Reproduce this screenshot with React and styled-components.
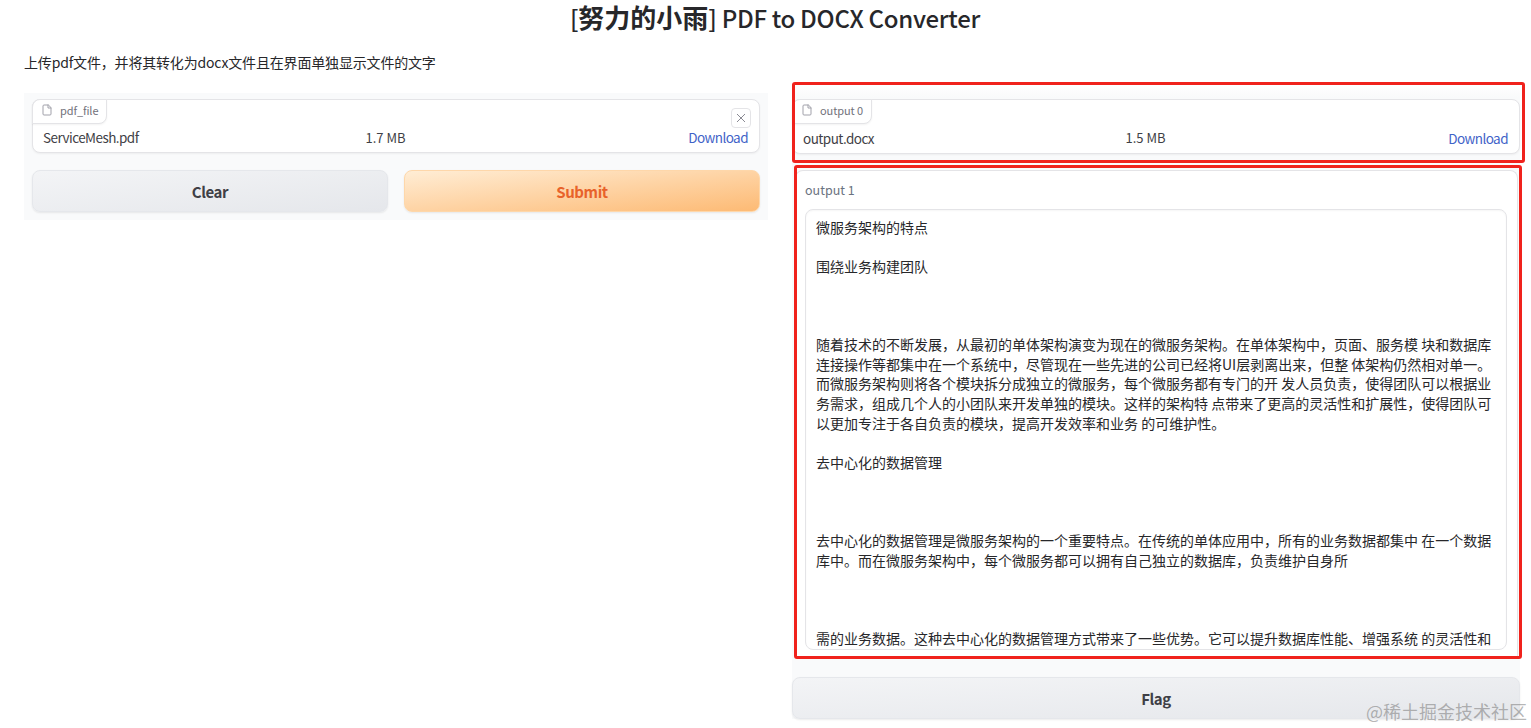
import React from 'react';
import styled, { createGlobalStyle } from 'styled-components';

const GlobalStyle = createGlobalStyle`
  html, body {
    margin: 0;
    padding: 0;
    background: #fff;
    overflow: hidden;
  }
  body {
    font-family: "Noto Sans CJK SC", "Noto Sans", sans-serif;
    color: #27272a;
  }
`;

const Page = styled.div`
  position: relative;
  width: 1531px;
  height: 728px;
  padding: 0 11px 0 24px;
  box-sizing: border-box;
  overflow: hidden;
`;

const Title = styled.h1`
  margin: -2px 0 0;
  height: 38px;
  padding-left: 6px;
  font-size: 24px;
  line-height: 38px;
  font-weight: 500;
  letter-spacing: -0.3px;
  text-align: center;
  color: #27272a;
  strong {
    font-size: 26px;
    font-weight: 700;
    letter-spacing: 0;
  }
`;

const Intro = styled.p`
  margin: 17px 0 0;
  font-size: 14px;
  line-height: 19px;
  letter-spacing: -0.17px;
  color: #27272a;
`;

const Columns = styled.div`
  display: grid;
  grid-template-columns: 744px 728px;
  gap: 24px;
  margin-top: 21px;
  align-items: start;
`;

const LeftPanel = styled.section`
  display: flex;
  flex-direction: column;
  gap: 17px;
  height: 127px;
  padding: 6px 8px 8px;
  box-sizing: border-box;
  background: #f9fafb;
`;

const RightColumn = styled.section`
  position: relative;
  display: flex;
  flex-direction: column;
  height: 634px;
  margin-top: -8px;
  padding-top: 14px;
  box-sizing: border-box;
  background: linear-gradient(#fff, #f9fafb 12px);
`;

const FileCard = styled.div`
  position: relative;
  display: flex;
  flex-direction: column;
  justify-content: flex-end;
  height: 55px;
  box-sizing: border-box;
  background: #fff;
  border: 1px solid #e4e4e7;
  border-radius: 8px;
  box-shadow: 0 1px 2px rgba(0, 0, 0, 0.05);
`;

const FileTab = styled.div`
  position: absolute;
  top: -1px;
  left: -1px;
  display: flex;
  align-items: center;
  gap: 7px;
  height: 25px;
  padding: 0 8px 3px;
  box-sizing: border-box;
  font-size: 11px;
  letter-spacing: -0.1px;
  color: #71717a;
  background: #fff;
  border: 1px solid #e4e4e7;
  border-radius: 8px 0 8px 0;
  box-shadow: 0 1px 2px rgba(0, 0, 0, 0.05);
`;

const CloseButton = styled.button`
  position: absolute;
  top: 8px;
  right: 8px;
  display: flex;
  align-items: center;
  justify-content: center;
  width: 20px;
  height: 20px;
  padding: 0;
  background: #fff;
  border: 1px solid #e4e4e7;
  border-radius: 4px;
`;

const FileRow = styled.div`
  display: grid;
  grid-template-columns: 1fr auto 1fr;
  align-items: center;
  height: 28px;
  padding: 0 11px 1px 10px;
  font-size: 13.5px;
  letter-spacing: -0.55px;
  color: #3f3f46;
`;

const FileSize = styled.span`
  margin-right: 20px;
  font-size: 13px;
  letter-spacing: 0;
`;

const Download = styled.a`
  justify-self: end;
  color: #3f63c8;
  text-decoration: none;
`;

const ButtonRow = styled.div`
  display: grid;
  grid-template-columns: 1fr 1fr;
  gap: 16px;
`;

const ActionButton = styled.button`
  display: block;
  width: ${p => (p.$wide ? '100%' : 'auto')};
  height: 42px;
  padding: 0;
  font-family: inherit;
  font-size: 15px;
  font-weight: 600;
  letter-spacing: -0.4px;
  color: ${p => (p.$primary ? '#e8622a' : '#3f3f46')};
  background: ${p => (p.$primary
    ? 'linear-gradient(to bottom right, #ffedd5, #fdba74)'
    : 'linear-gradient(to bottom right, #f3f4f6, #e5e7eb)')};
  border: 1px solid ${p => (p.$primary ? '#fed7aa' : '#e5e7eb')};
  border-radius: 8px;
  box-shadow: 0 1px 2px rgba(0, 0, 0, 0.08);
`;

const TextPanel = styled.div`
  height: 492px;
  margin: 16px 2px 0 3px;
  padding: 10px 10px 0 9px;
  box-sizing: border-box;
  background: #fff;
  border: 1px solid #e4e4e7;
  border-bottom: none;
  border-radius: 8px 8px 0 0;
`;

const FieldLabel = styled.div`
  height: 28px;
  font-size: 12.5px;
  line-height: 17px;
  color: #6b7280;
`;

const TextArea = styled.div`
  height: 441px;
  padding: 8px 10px 0;
  box-sizing: border-box;
  overflow: hidden;
  white-space: pre;
  font-size: 14px;
  line-height: 19.6px;
  color: #27272a;
  background: #fff;
  border: 1px solid #e4e4e7;
  border-radius: 8px;
  box-shadow: inset 0 1px 2px rgba(0, 0, 0, 0.04);
`;

const FlagSlot = styled.div`
  margin-top: 19px;
`;

const RedFrame = styled.div`
  position: absolute;
  top: ${p => p.$top}px;
  left: ${p => p.$left}px;
  width: ${p => p.$width}px;
  height: ${p => p.$height}px;
  box-sizing: border-box;
  border: 3px solid #f0221c;
  border-radius: 3px;
  pointer-events: none;
`;

const Watermark = styled.div`
  position: absolute;
  right: 4px;
  bottom: 6px;
  font-size: 18px;
  line-height: 22px;
  color: rgba(120, 120, 120, 0.55);
  pointer-events: none;
`;

const FileIcon = () => (
  <svg width="12" height="12" viewBox="0 0 24 24" fill="none" stroke="#a1a1aa" strokeWidth="2" strokeLinecap="round" strokeLinejoin="round">
    <path d="M14 2H6a2 2 0 0 0-2 2v16a2 2 0 0 0 2 2h12a2 2 0 0 0 2-2V8z" />
    <path d="M14 2v6h6" />
  </svg>
);

const CloseIcon = () => (
  <svg width="10" height="10" viewBox="0 0 10 10" fill="none" stroke="#8a8a93" strokeWidth="1">
    <path d="M1 1l8 8M9 1L1 9" />
  </svg>
);

const outputText = `微服务架构的特点

围绕业务构建团队



随着技术的不断发展，从最初的单体架构演变为现在的微服务架构。在单体架构中，页面、服务模 块和数据库
连接操作等都集中在一个系统中，尽管现在一些先进的公司已经将UI层剥离出来，但整 体架构仍然相对单一。
而微服务架构则将各个模块拆分成独立的微服务，每个微服务都有专门的开 发人员负责，使得团队可以根据业
务需求，组成几个人的小团队来开发单独的模块。这样的架构特 点带来了更高的灵活性和扩展性，使得团队可
以更加专注于各自负责的模块，提高开发效率和业务 的可维护性。

去中心化的数据管理



去中心化的数据管理是微服务架构的一个重要特点。在传统的单体应用中，所有的业务数据都集中 在一个数据
库中。而在微服务架构中，每个微服务都可以拥有自己独立的数据库，负责维护自身所



需的业务数据。这种去中心化的数据管理方式带来了一些优势。它可以提升数据库性能、增强系统 的灵活性和`;

const FileBlock = ({ label, name, size, closable }) => (
  <FileCard>
    <FileTab>
      <FileIcon />
      {label}
    </FileTab>
    {closable && (
      <CloseButton aria-label="Clear">
        <CloseIcon />
      </CloseButton>
    )}
    <FileRow>
      <span>{name}</span>
      <FileSize>{size}</FileSize>
      <Download href="#">Download</Download>
    </FileRow>
  </FileCard>
);

const App = () => (
  <Page>
    <GlobalStyle />
    <Title>[<strong>努力的小雨</strong>] PDF to DOCX Converter</Title>
    <Intro>上传pdf文件，并将其转化为docx文件且在界面单独显示文件的文字</Intro>
    <Columns>
      <LeftPanel>
        <FileBlock label="pdf_file" name="ServiceMesh.pdf" size="1.7 MB" closable />
        <ButtonRow>
          <ActionButton>Clear</ActionButton>
          <ActionButton $primary>Submit</ActionButton>
        </ButtonRow>
      </LeftPanel>
      <RightColumn>
        <FileBlock label="output 0" name="output.docx" size="1.5 MB" />
        <TextPanel>
          <FieldLabel>output 1</FieldLabel>
          <TextArea>{outputText}</TextArea>
        </TextPanel>
        <FlagSlot>
          <ActionButton $wide>Flag</ActionButton>
        </FlagSlot>
        <RedFrame $top={-3} $left={0} $width={733} $height={81} />
        <RedFrame $top={80} $left={2} $width={728} $height={494} />
      </RightColumn>
    </Columns>
    <Watermark>@稀土掘金技术社区</Watermark>
  </Page>
);

export default App;
